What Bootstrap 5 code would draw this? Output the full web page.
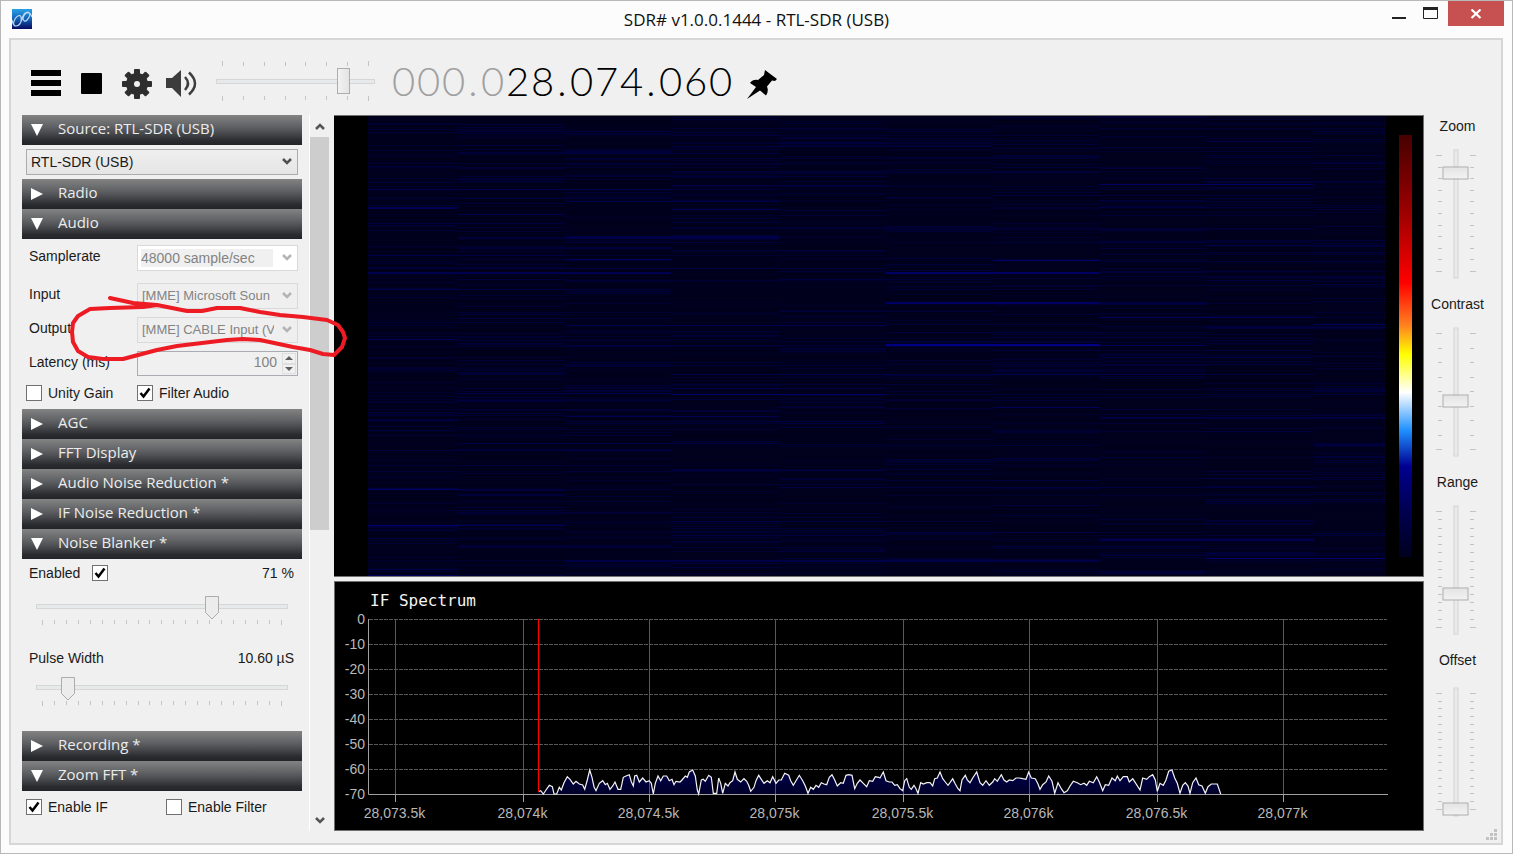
<!DOCTYPE html>
<html lang="en">
<head>
<meta charset="utf-8">
<meta name="viewport" content="width=device-width, initial-scale=1">
<title>SDR# v1.0.0.1444 - RTL-SDR (USB)</title>
<link href="https://cdn.jsdelivr.net/npm/bootstrap@5.3.0/dist/css/bootstrap.min.css" rel="stylesheet">
<style>
body { background: #fcfcfc; color: #1a1a1a; font-family: "Liberation Sans", Arial, sans-serif; font-size: 14px; line-height: 16px; }
.app-window { min-height: 100vh; border: 1px solid #b8b8b8; }
button { font: inherit; }
.plain { background: none; border: 0; padding: 0; line-height: 0; }

/* title bar */
.title-bar { height: 37px; display: grid; grid-template-columns: 1fr auto 1fr; }
.app-icon { margin: 8px 0 0 11px; }
.app-title { font: 17px/38px "Open Sans", "Segoe UI", sans-serif; color: #111; }
.close-btn { width: 56px; height: 25px; background: #c75050; }

/* client area */
.client { margin: 0 9px 8px 8px; border: 2px solid #d6d6d6; background: #f0f0f0; padding-bottom: 12px; }
.tool-bar { height: 75px; padding: 12px 0 0 20px; gap: 20px; }
.tool-pair { gap: 14px; }
.freq-row { gap: 14px; margin-left: -4px; }
.freq { font: 300 40px/58px Lato, sans-serif; color: #000; }
.freq span { width: 25px; text-align: center; }
.freq .dot { width: 14px; }
.freq .off { color: #a0a0a0; }

/* sliders */
.track-slider { -webkit-appearance: none; appearance: none; background: none; margin: 0; display: block; width: 100%; height: 26px; padding: 0; }
.track-slider::-webkit-slider-runnable-track { height: 5px; background: #e7eaea; border: 1px solid #d6d6d6; }
.track-slider::-webkit-slider-thumb { -webkit-appearance: none; width: 13px; height: 26px; margin-top: -12px; border: 1px solid #acacac; background: linear-gradient(90deg, #f2f2f2, #e4e4e4); }
.track-slider.pointed::-webkit-slider-thumb { width: 14px; height: 24px; margin-top: -9px; border: 0; background: url("data:image/svg+xml,%3Csvg xmlns='http://www.w3.org/2000/svg' width='14' height='24'%3E%3Cpath d='M.5.5h13v16L7 23 .5 16.500z' fill='%23ececec' stroke='%23acacac'/%3E%3C/svg%3E"); }
.ticks { display: flex; justify-content: space-between; padding: 0 6px; height: 5px; }
.ticks i { width: 1px; height: 4px; background: #c4c4c4; }
.ticks i:first-child, .ticks i:last-child { height: 5px; }
.ticks.up { align-items: flex-end; }
.volume { width: 159px; padding-top: 9px; margin-left: -2px; }
.volume .track-slider { margin: 2px 0; }
.v-slider { height: 129px; display: flex; justify-content: center; }
.v-box { width: 28px; display: flex; align-items: center; justify-content: center; }
.v-box .track-slider { width: 129px; flex: none; transform: rotate(-90deg); }
.v-slider .ticks { flex-direction: column; width: 6px; height: 129px; padding: 6px 0; align-items: flex-start; }
.v-slider .ticks.left { align-items: flex-end; }
.v-slider .ticks i { width: 4px; height: 1px; }
.v-slider .ticks i:first-child, .v-slider .ticks i:last-child { width: 6px; }

/* side panel */
.side { width: 280px; margin-left: 11px; }
.side-head { display: flex; width: 100%; height: 30px; border: 0; padding: 0 0 5px 9px; align-items: center; color: #ececec; text-align: left;
  background: linear-gradient(#838383, #5e6063 40%, #46484c 62%, #2b2c30 85%, #232428); font: 15px/20px "Open Sans", "Segoe UI", sans-serif; }
.side-head::before { content: ""; width: 12px; height: 12px; margin: 5px 15px 0 0; background: #fff; clip-path: polygon(0 0, 100% 50%, 0 100%); }
.side-head[aria-expanded="true"]::before { clip-path: polygon(0 0, 100% 0, 50% 100%); }
.win-select { -webkit-appearance: none; appearance: none; display: block; width: 100%; height: 26px; border: 1px solid #acacac; border-radius: 0; padding: 0 25px 0 4px; color: #1a1a1a; font: inherit; line-height: 22px; white-space: nowrap;
  background: url("data:image/svg+xml,%3Csvg xmlns='http://www.w3.org/2000/svg' width='10' height='8'%3E%3Cpath d='M1 1l4 4 4-4' fill='none' stroke='%23505050' stroke-width='2.500'/%3E%3C/svg%3E") right 5px center no-repeat, linear-gradient(#efefef, #e5e5e5); }
.win-select:disabled { color: #838383; opacity: 1; border-color: #d9d9d9;
  background: url("data:image/svg+xml,%3Csvg xmlns='http://www.w3.org/2000/svg' width='10' height='8'%3E%3Cpath d='M1 1l4 4 4-4' fill='none' stroke='%23b4b4b4' stroke-width='2.500'/%3E%3C/svg%3E") right 5px center no-repeat, #efefef; }
.win-select.device { font-size: 13px; padding-right: 23px; }
.win-select.editable:disabled { padding-left: 3px; background-color: #fff;
  background-image: url("data:image/svg+xml,%3Csvg xmlns='http://www.w3.org/2000/svg' width='10' height='8'%3E%3Cpath d='M1 1l4 4 4-4' fill='none' stroke='%23b4b4b4' stroke-width='2.500'/%3E%3C/svg%3E"), linear-gradient(#f0f0f0, #f0f0f0); background-position: right 5px center, 3px 3px; background-size: auto, 132px 18px; background-repeat: no-repeat; }
.audio-grid { display: grid; grid-template-columns: 108px 161px; padding: 6px 4px 9px 7px; row-gap: 8px; align-items: center; }
.audio-grid label { padding-bottom: 4px; }
.first-row { margin-bottom: 4px; }
.spin { height: 25px; border: 1px solid #a9acb5; }
.spin input { min-width: 0; border: 0; background: none; color: #838383; text-align: right; padding: 0 5px 3px 0; -moz-appearance: textfield; }
.spin input::-webkit-inner-spin-button { display: none; }
.spin-keys { width: 18px; margin: 1px 1px 1px 0; }
.spin-keys button { border: 1px solid #dedede; }
.tick-box { -webkit-appearance: none; appearance: none; width: 16px; height: 16px; border: 1px solid #707070; background: #fff; margin: 0; flex: none; }
.tick-box:checked { background: #fff url("data:image/svg+xml,%3Csvg xmlns='http://www.w3.org/2000/svg' width='14' height='14'%3E%3Cpath d='M2.500 7l3 3.500 6-8' fill='none' stroke='%23000' stroke-width='2.500'/%3E%3C/svg%3E"); }
.check-row { gap: 6px; }
.half-left { width: 111px; }
.wide-left { width: 140px; }
.noise { height: 172px; padding: 6px 8px 0 7px; }
.noise-slider { padding: 0 6px 0 7px; }
.noise-slider .ticks { margin-top: 1px; }
.enable-row { margin-bottom: 12px; }
.pulse-row { margin: 25px 0 8px; }

.scroller { width: 20px; margin-left: 7px; border-left: 1px solid #fff; }
.scroller button { height: 22px; }
.scroller .thumb { height: 393px; background: #cdcdcd; }

/* displays */
.displays { margin-left: 5px; gap: 4px; min-width: 0; }
.waterfall { background: #000; border: solid #707070; border-width: 1px 1px 1px 0; padding-left: 34px; min-height: 462px; }
.waterfall canvas { min-width: 0; width: 0; height: 460px; }
.heat-bar { width: 13px; margin: 19px 11px 19px 13px; background: linear-gradient(#470000, #a00000 19%, #f00 35%, #ff8020 45%, #ff0 52%, #fff 61%, #1e90ff 70%, #000091 78.5%, #000050 89%, #000020); }
.spectrum { background: #000; border: 1px solid #707070; height: 250px; }
.spectrum svg { display: block; width: 100%; height: 100%; }
.spectrum text { fill: #b8b8b8; font: 14px "Liberation Sans", Arial, sans-serif; }
.spectrum .heading { fill: #f4f4f4; font: 16px "DejaVu Sans Mono", monospace; }

.controls { width: 77px; padding-bottom: 4px; }
.controls .group { flex: 1; }
.controls label { display: block; text-align: center; padding: 3px 10px 15px 0; line-height: 16px; }
.controls .v-slider { padding-right: 14px; }
.controls .group:last-child label { padding-bottom: 19px; }
.ink { position: absolute; left: 59px; top: 178px; pointer-events: none; }
.grip { position: absolute; right: 3px; bottom: 2px; }
</style>
</head>
<body>
<div class="app-window d-flex flex-column">
  <header class="title-bar">
    <svg class="app-icon" width="20" height="20" viewBox="0 0 20 20" aria-hidden="true">
      <defs><linearGradient id="ic" x2="0" y2="1"><stop stop-color="#27a3e6"/><stop offset=".5" stop-color="#1560b4"/><stop offset="1" stop-color="#080a60"/></linearGradient></defs>
      <rect width="20" height="20" fill="url(#ic)"/>
      <path d="M0 11c1 3 1 6 4 6 4 0 6-5 5-9-1-3-4-1-6 2-2 4-2 7 1 7 4 0 5-4 6-7 1-4 3-7 6-7 3 1 2 5-1 8-2 2-4 1-4-2 1-4 4-6 6-5 2 0 2 2 3 4" fill="none" stroke="#b9d8f4" stroke-width="1.200"/>
    </svg>
    <h1 class="app-title m-0">SDR# v1.0.0.1444 - RTL-SDR (USB)</h1>
    <div class="d-flex justify-content-end align-items-start pe-2">
      <button class="plain me-3" aria-label="Minimize"><svg width="14" height="25"><path d="M0 17h14" stroke="#222" stroke-width="2"/></svg></button>
      <button class="plain" aria-label="Maximize"><svg width="26" height="25"><path d="M1.500 7.500h14v10h-14z" fill="none" stroke="#222"/><path d="M1 7.500h15" stroke="#222" stroke-width="3"/></svg></button>
      <button class="plain close-btn" aria-label="Close"><svg width="12" height="10"><path d="M1.500.5l9 8.500m0-8.500l-9 8.500" stroke="#fff" stroke-width="2.200"/></svg></button>
    </div>
  </header>

  <main class="client flex-grow-1 d-flex flex-column position-relative">
    <div class="tool-bar d-flex align-items-start">
      <button class="plain" aria-label="Menu"><svg width="30" height="60"><path d="M0 21h30M0 31h30M0 41h30" stroke="#000" stroke-width="6"/></svg></button>
      <button class="plain" aria-label="Stop"><svg width="21" height="60"><rect y="21" width="21" height="21" rx="1" fill="#000"/></svg></button>
      <div class="tool-pair d-flex">
        <button class="plain" aria-label="Settings"><svg width="30" height="60" viewBox="-15 -32 30 60"><circle r="7" fill="none" stroke="#2e2e2e" stroke-width="8"/><g id="teeth" fill="#2e2e2e"></g></svg></button>
        <button class="plain" aria-label="Mute"><svg width="32" height="60"><path d="M0 26h6l9-8v27l-9-9H0z" fill="#3c3c3c"/><path d="M19 25q6 6.500 0 13M23 20.500q12 11 0 22" fill="none" stroke="#3c3c3c" stroke-width="2.500"/></svg></button>
      </div>
      <div class="volume">
        <div class="ticks up" data-n="8"></div>
        <input class="track-slider" type="range" min="0" max="100" value="83" aria-label="Volume">
        <div class="ticks" data-n="8"></div>
      </div>
      <div class="freq-row d-flex">
        <div class="freq d-flex" id="freq" aria-label="Frequency"></div>
        <button class="plain" aria-label="Pin"><svg width="30" height="60" viewBox="0 -18 30 60"><path d="M18 0l12 9-2 2-3-.5-5 6q2 5-1 9l-6-5-13 8.500L9 17 3 13q3-4 8-3l6-5z" fill="#000"/></svg></button>
      </div>
    </div>

    <div class="d-flex flex-grow-1 position-relative">
      <aside class="side">
        <button class="side-head" aria-expanded="true">Source: RTL-SDR (USB)</button>
        <div class="p-1"><select class="win-select" aria-label="Source"><option>RTL-SDR (USB)</option></select></div>
        <button class="side-head" aria-expanded="false">Radio</button>
        <button class="side-head" aria-expanded="true">Audio</button>
        <div class="audio-grid">
          <label for="rate" class="first-row">Samplerate</label>
          <select id="rate" class="win-select editable first-row" disabled><option>48000 sample/sec</option></select>
          <label for="inp">Input</label>
          <select id="inp" class="win-select device" disabled><option>[MME] Microsoft Soun</option></select>
          <label for="outp">Output</label>
          <select id="outp" class="win-select device" disabled><option>[MME] CABLE Input (VB-Audio</option></select>
          <label for="lat">Latency (ms)</label>
          <div class="spin d-flex">
            <input id="lat" type="number" value="100" class="flex-grow-1" disabled>
            <div class="spin-keys d-flex flex-column">
              <button class="plain flex-fill" aria-label="Increase" disabled><svg width="8" height="4"><path d="M0 4l4-4 4 4z" fill="#606060"/></svg></button>
              <button class="plain flex-fill" aria-label="Decrease" disabled><svg width="8" height="4"><path d="M0 0l4 4 4-4z" fill="#606060"/></svg></button>
            </div>
          </div>
        </div>
        <div class="d-flex px-1 pb-2">
          <div class="check-row half-left d-flex"><input class="tick-box" type="checkbox" id="unity"><label for="unity">Unity Gain</label></div>
          <div class="check-row d-flex"><input class="tick-box" type="checkbox" id="filt" checked><label for="filt">Filter Audio</label></div>
        </div>
        <button class="side-head" aria-expanded="false">AGC</button>
        <button class="side-head" aria-expanded="false">FFT Display</button>
        <button class="side-head" aria-expanded="false">Audio Noise Reduction *</button>
        <button class="side-head" aria-expanded="false">IF Noise Reduction *</button>
        <button class="side-head" aria-expanded="true">Noise Blanker *</button>
        <div class="noise">
          <div class="enable-row d-flex justify-content-between">
            <div class="d-flex gap-2"><label for="nb">Enabled</label><input class="tick-box ms-1" type="checkbox" id="nb" checked></div>
            <output>71 %</output>
          </div>
          <div class="noise-slider">
            <input class="track-slider pointed" type="range" min="0" max="100" value="71" aria-label="Threshold">
            <div class="ticks" data-n="21"></div>
          </div>
          <div class="pulse-row d-flex justify-content-between"><label for="pw">Pulse Width</label><output>10.60 µS</output></div>
          <div class="noise-slider">
            <input class="track-slider pointed" id="pw" type="range" min="0" max="100" value="10">
            <div class="ticks" data-n="21"></div>
          </div>
        </div>
        <button class="side-head" aria-expanded="false">Recording *</button>
        <button class="side-head" aria-expanded="true">Zoom FFT *</button>
        <div class="d-flex px-1 pt-2">
          <div class="check-row wide-left d-flex"><input class="tick-box" type="checkbox" id="eif" checked><label for="eif">Enable IF</label></div>
          <div class="check-row d-flex"><input class="tick-box" type="checkbox" id="efl"><label for="efl">Enable Filter</label></div>
        </div>
      </aside>

      <div class="scroller d-flex flex-column">
        <button class="plain" aria-label="Scroll up"><svg width="10" height="7"><path d="M1 6l4-4 4 4" fill="none" stroke="#555" stroke-width="2.500"/></svg></button>
        <div class="thumb"></div>
        <button class="plain mt-auto" aria-label="Scroll down"><svg width="10" height="7"><path d="M1 1l4 4 4-4" fill="none" stroke="#555" stroke-width="2.500"/></svg></button>
      </div>

      <section class="displays d-flex flex-column flex-grow-1">
        <div class="waterfall d-flex flex-grow-1">
          <canvas id="fall" class="flex-grow-1" width="1018" height="460"></canvas>
          <div class="heat-bar"></div>
        </div>
        <div class="spectrum"><svg id="spec" viewBox="1 1 1088 248" role="img" aria-label="IF Spectrum"></svg></div>
      </section>

      <aside class="controls d-flex flex-column" id="controls"></aside>

      <svg class="ink" width="280" height="72" viewBox="70 293 280 72" aria-hidden="true"><path fill="none" stroke="#ed1c24" stroke-width="4" stroke-linejoin="round" stroke-linecap="round" d="M110 298L133 303 157 305 187 311 202 311 217 308 240 308 260 312 280 315 303 317 327 320 338 325 343 332 345 338 342 347 334 355 323 354 310 350 293 347 260 340 243 339 227 340 202 343 177 346 157 350 123 359 103 359 88 357 78 351 73 342 72 332 73 323 78 316 90 309 110 308 143 307 157 305"/></svg>
    </div>
    <svg class="grip" width="12" height="12" aria-hidden="true"><path d="M8 0h3v3H8zM4 4h3v3H4zM8 4h3v3H8zM0 8h3v3H0zM4 8h3v3H4zM8 8h3v3H8z" fill="#c2c2c2"/></svg>
  </main>
</div>
<script src="https://cdn.jsdelivr.net/npm/bootstrap@5.3.0/dist/js/bootstrap.bundle.min.js"></script>
<script>
// frequency digits
document.getElementById('freq').innerHTML = [...'000.028.074.060'].map((c, i) =>
  `<span class="${c === '.' ? 'dot ' : ''}${i < 5 ? 'off' : ''}">${c}</span>`).join('');

// gear teeth
document.getElementById('teeth').innerHTML = [0,45,90,135,180,225,270,315].map(a =>
  `<rect x="-3" y="-15" width="6" height="7" rx="1" transform="rotate(${a})"/>`).join('');

// vertical sliders
document.getElementById('controls').innerHTML = [['Zoom', 86, 11], ['Contrast', 42, 9], ['Range', 29, 15], ['Offset', 0, 16]].map(([name, v, n]) =>
  `<div class="group"><label for="s${name}">${name}</label><div class="v-slider"><div class="ticks left" data-n="${n}"></div>
   <div class="v-box"><input class="track-slider" id="s${name}" type="range" min="0" max="100" value="${v}"></div><div class="ticks" data-n="${n}"></div></div></div>`).join('');
document.querySelectorAll('.ticks').forEach(t => t.innerHTML = '<i></i>'.repeat(t.dataset.n));

// waterfall: faint random rows per frequency bin, then the stronger bursts
const g = document.getElementById('fall').getContext('2d');
const edge = [0, 90, 197, 303, 411, 518, 625, 732, 838, 946, 1018];
let seed = 7;
const rnd = () => (seed = (seed * 16807) % 2147483647) / 2147483647;
const bar = (y, a, b, v, h = 1) => { g.fillStyle = `rgb(0,0,${Math.round(v)})`; g.fillRect(edge[a], y, edge[b] - edge[a], h); };
bar(0, 0, 10, 28, 460);
for (let y = 0; y < 460; y++) {
  const row = edge.map(() => rnd());
  for (let c = 0; c < 10; c++) {
    const m = (row[c] + row[c + 1]) / 2;
    bar(y, c, c + 1, 26 + 14 * rnd() * m + (m > .72 ? 26 * m : 0));
  }
}
// [row, first bin, end bin, blue level, height]
[[15,1,3,64],[37,1,2,60],[37,2,4,70],[60,1,3,52],[60,4,5,62],[25,8,9,70],[47,9,10,58],[51,6,8,52],[55,3,8,50],
 [69,3,5,64],[68,7,9,100],[73,0,3,78],[85,2,4,74],[91,0,1,82,2],[93,3,4,90],[98,1,2,78],[107,0,2,60],[94,4,5,58],
 [120,2,4,72,3],[121,1,2,58,2],[126,2,4,62],[131,1,3,58,2],[139,0,2,70],[143,2,3,88],[134,3,5,54],[129,8,10,70],
 [144,6,7,104],[145,7,10,60],[152,0,5,62],[156,0,1,76,2],[156,1,3,80,2],[156,5,7,100,2],[163,4,6,60],[164,8,9,68],
 [168,9,10,62],[173,0,2,72],[177,2,3,58],[186,5,7,100,2],[186,7,8,64,2],[195,4,6,60],[201,7,9,92],[208,9,10,98],[211,8,10,62],
 [209,2,3,76],[209,3,5,82],[221,6,8,64],[223,0,1,92],[228,5,7,132,2],[229,7,8,92],[229,2,5,58],[241,7,9,70],[248,5,9,54],
 [258,3,8,70],[258,8,9,60],[272,3,5,72],[277,1,3,74],[278,3,5,104],[278,8,10,58],[284,1,3,58],[291,6,7,84],[296,0,1,64],
 [300,2,4,78],[301,7,10,64,2],[304,0,1,76],[305,3,5,64],[315,8,9,60],[319,0,3,52],[327,1,4,68],[328,4,5,54],
 [333,1,3,58],[341,7,8,58],[354,3,5,66],[371,4,9,64],[373,0,1,100],[373,1,2,68],[379,5,8,50],[385,8,10,60],
 [405,3,5,68],[409,0,1,124],[409,1,2,84],[419,3,5,66],[423,7,9,78,2],[429,1,3,54,3],[444,2,7,70,2],[442,8,10,110],[453,0,1,76],[459,0,1,92]
].forEach(l => bar(...l));

// IF spectrum
const trace1 = '55,125 62,122 70,132 78,120 88,106 97,110 102,132 110,132 118,112 124,120 132,98 142,80 150,88 160,102 168,94 178,102 188,105 194,118 202,90 209,60 216,82 222,110 228,122 238,100 248,92 256,104 262,100 270,118 278,108 285,96 294,118 302,118 310,82 318,78 328,74 334,95 340,108 344,78 350,76 358,96 368,84 378,96 388,92 394,100 400,132 406,100 414,78 422,92 430,78 440,78 448,92 456,88 462,104 468,94 480,96 486,90 496,78 502,82 508,66 518,60 526,78 532,120 536,132 544,90 550,88 556,94 566,76 574,82 580,130 590,130 596,84 602,100 608,130 616,100 624,108 630,98 638,92 645,66 652,88 662,96 672,86 680,94 686,106 692,124 702,112 708,92 716,76 724,88 732,100 742,92 750,98 758,80 768,100 776,90 784,90 794,70 806,76 812,92 820,106 828,92 838,76 848,92 856,108 864,130 872,112 880,118 888,106 896,112 904,98 912,102 920,104 928,82 936,74 944,90 952,108 962,98 970,100 978,76 986,74 996,76 1004,116 1012,100 1020,90 1030,100 1040,110 1048,92 1058,94 1066,80 1076,82';
const trace2 = '0,84 10,66 18,92 28,96 36,96 44,106 52,104 60,116 68,122 74,92 80,86 88,112 94,118 102,106 108,116 114,130 122,98 130,102 140,98 150,98 158,108 164,86 172,84 180,66 188,86 196,96 204,106 210,98 218,86 226,102 234,116 240,122 246,90 256,76 262,90 270,98 278,84 290,66 300,98 308,106 318,92 328,106 338,96 344,86 352,94 364,74 372,90 380,96 388,90 398,92 408,84 418,84 428,86 438,88 446,66 454,84 466,86 474,102 480,118 488,104 498,96 506,78 516,94 524,130 534,98 544,116 552,128 562,122 570,108 580,94 592,98 602,104 612,100 620,106 628,94 640,98 650,80 658,96 668,122 676,104 686,106 696,84 706,92 712,78 720,92 730,80 742,80 748,96 758,86 766,98 780,120 788,84 800,88 808,80 818,74 826,90 832,124 840,100 850,106 858,90 866,64 876,60 884,84 892,100 900,130 908,106 916,98 924,108 930,130 938,98 948,84 956,104 966,108 976,130 984,110 994,102 1012,102 1022,132';
const conv = (s, dx) => s.split(' ').map(p => { const [x, y] = p.split(',').map(Number); return `${(x / 3 + dx).toFixed(1)},${(y / 3 + 169).toFixed(1)}`; }).join(' ');
const line = conv(trace1, 186) + ' ' + conv(trace2, 546);
let s = '<defs><linearGradient id="sp" x2="0" y2="1"><stop stop-color="#000050"/><stop offset="1" stop-color="#000028"/></linearGradient></defs>';
s += '<text class="heading" x="36" y="25">IF Spectrum</text>';
for (let i = 0; i < 8; i++) {
  const y = 38.5 + 25 * i;
  if (i < 7) s += `<path d="M35 ${y}H1053" stroke="#585858" stroke-dasharray="4 1"/>`;
  s += `<text x="31" y="${y + 4.5}" text-anchor="end">${i ? -10 * i : 0}</text>`;
}
s += `<polygon points="204,213.500 ${line}" fill="url(#sp)"/>`;
['28,073.5k', '28,074k', '28,074.5k', '28,075k', '28,075.5k', '28,076k', '28,076.5k', '28,077k'].forEach((t, i) => {
  const x = [61.5, 189.5, 315.5, 441.5, 569.5, 695.5, 823.5, 949.5][i];
  s += `<path d="M${x} 38V213" stroke="#585858"/><path d="M${x} 213v8" stroke="#a0a0a0"/><text x="${x - 1}" y="237" text-anchor="middle">${t}</text>`;
});
s += `<path d="M34.500 38V213.500H1054" fill="none" stroke="#a0a0a0"/><polyline points="${line}" fill="none" stroke="#f4f4f4" stroke-width="1.200"/><path d="M204.500 38V211" stroke="#f00" stroke-width="1.300"/>`;
document.getElementById('spec').innerHTML = s;
</script>
</body>
</html>
